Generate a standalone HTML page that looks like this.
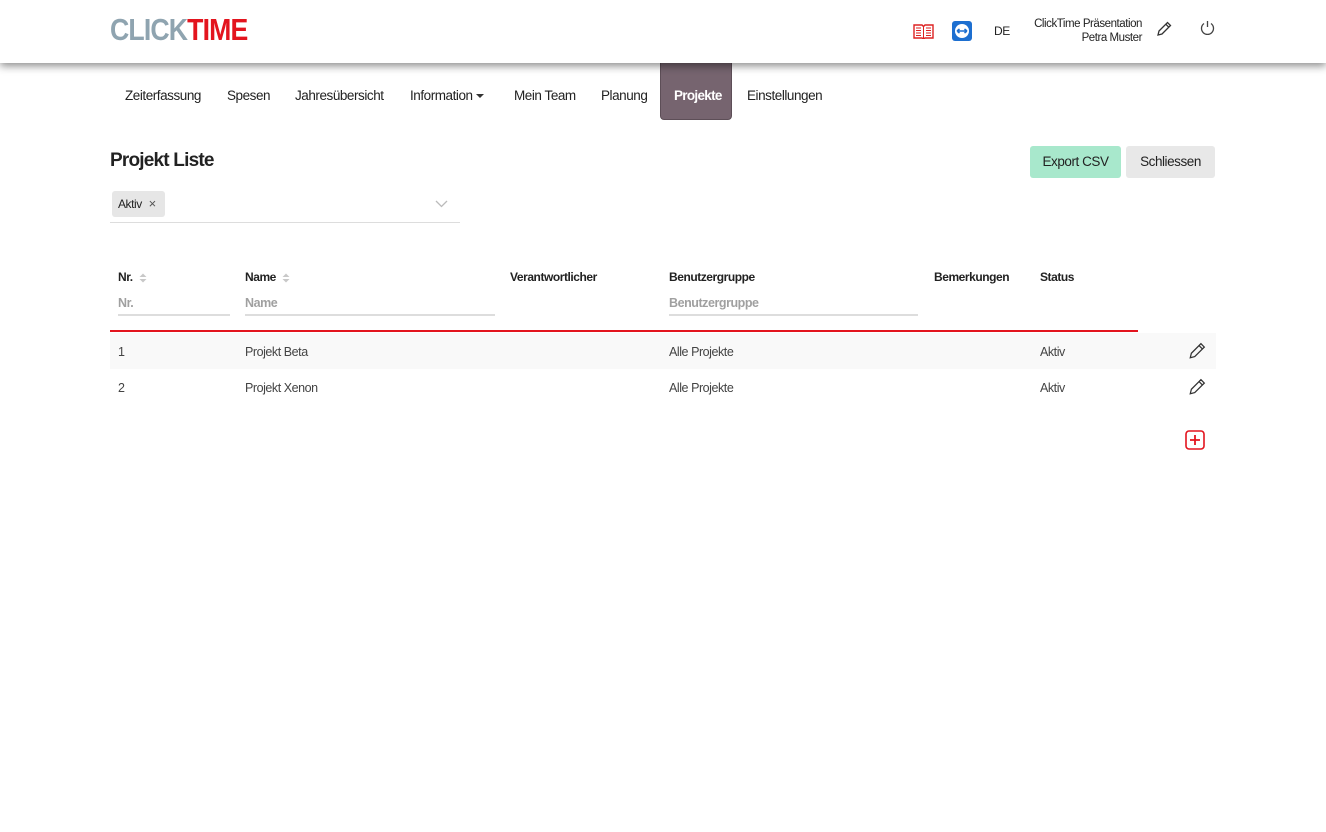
<!DOCTYPE html>
<html><head><meta charset="utf-8">
<style>
*{box-sizing:border-box;margin:0;padding:0}
body{width:1326px;height:832px;background:#fff;font-family:"Liberation Sans Narrow","Liberation Sans",sans-serif;color:#222;position:relative;overflow:hidden;letter-spacing:-0.45px}
.a{position:absolute;white-space:nowrap}
.hdr{position:absolute;left:0;top:0;width:1326px;height:63px;background:#fff;box-shadow:0 3px 8px rgba(0,0,0,.45);z-index:2}
.nav{font-size:13.5px;color:#222;top:88px}
.th{font-size:12px;font-weight:bold;top:270px}
.ph{font-size:12.5px;color:#a0a0a0;font-weight:bold;top:296px}
.ul{position:absolute;height:2px;background:#ddd;top:314px}
.td{font-size:12.5px;color:#444}
.sort{display:inline-block;width:8px;height:12px;vertical-align:middle;margin-left:3px}
</style></head><body>
<div class="hdr">
 <div class="a" style="left:110px;top:12px;font-family:'Liberation Sans',sans-serif;font-size:31px;font-weight:bold;letter-spacing:-1px;transform:scaleX(0.86);transform-origin:left"><span style="color:#8fa4b0">CLICK</span><span style="color:#e3141e">TIME</span></div>
 <svg class="a" style="left:913px;top:24px" width="21" height="15" viewBox="0 0 21 15"><path d="M1 1h8l1.5 1.5L12 1h8v13h-8l-1.5 1L9 14H1z" fill="#fff" stroke="#d22" stroke-width="1.4"/><path d="M10.5 2.5v12M3 4h5M3 6.5h5M3 9h5M3 11.5h5M13 4h5M13 6.5h5M13 9h5M13 11.5h5" stroke="#d22" stroke-width="1"/></svg>
 <svg class="a" style="left:952px;top:21px" width="20" height="20" viewBox="0 0 20 20"><rect width="20" height="20" rx="3" fill="#1d6fd0"/><circle cx="10" cy="10" r="7" fill="#fff"/><path d="M5 10h10M5 10l2.5-2M5 10l2.5 2M15 10l-2.5-2M15 10l-2.5 2" stroke="#1d6fd0" stroke-width="1.6"/></svg>
 <div class="a" style="left:994px;top:24px;font-size:12px">DE</div>
 <div class="a" style="right:184px;top:17px;font-size:11.5px;text-align:right;line-height:14px">ClickTime Präsentation<br>Petra Muster</div>
 <svg class="a" style="left:1156px;top:21px" width="16" height="16" viewBox="0 0 16 16"><path d="M2 14l1-4 8.5-8.5 3 3L6 13z M9.8 3.2l3 3" fill="none" stroke="#333" stroke-width="1.3"/></svg>
 <svg class="a" style="left:1199px;top:20px" width="17" height="17" viewBox="0 0 17 17"><path d="M5 3.5A6 6 0 1 0 12 3.5" fill="none" stroke="#444" stroke-width="1.3"/><path d="M8.5 1v6" stroke="#444" stroke-width="1.3"/></svg>
</div>
<div class="a" style="left:660px;top:60px;width:72px;height:60px;background:#76646f;border-radius:0 0 4px 4px;border:1px solid #5d4e57"></div>
<div class="a nav" style="left:125px">Zeiterfassung</div>
<div class="a nav" style="left:227px">Spesen</div>
<div class="a nav" style="left:295px">Jahresübersicht</div>
<div class="a nav" style="left:410px">Information <span style="display:inline-block;border-left:4px solid transparent;border-right:4px solid transparent;border-top:4px solid #333;vertical-align:middle"></span></div>
<div class="a nav" style="left:514px">Mein Team</div>
<div class="a nav" style="left:601px">Planung</div>
<div class="a nav" style="left:674px;color:#fff;font-weight:bold;letter-spacing:-0.7px">Projekte</div>
<div class="a nav" style="left:747px">Einstellungen</div>

<div class="a" style="left:110px;top:150px;font-size:19px;font-weight:bold;color:#222;letter-spacing:-0.8px">Projekt Liste</div>
<div class="a" style="left:1030px;top:146px;width:91px;height:32px;background:#a8e8cc;border-radius:3px;font-size:13.5px;text-align:center;line-height:32px">Export CSV</div>
<div class="a" style="left:1126px;top:146px;width:89px;height:32px;background:#e8e8e8;border-radius:3px;font-size:13.5px;text-align:center;line-height:32px">Schliessen</div>

<div class="a" style="left:112px;top:191px;width:53px;height:26px;background:#e6e6e6;border-radius:3px;font-size:12px;line-height:26px;padding-left:6px">Aktiv <span style="margin-left:4px;color:#555;font-size:13px">×</span></div>
<svg class="a" style="left:435px;top:200px" width="13" height="8" viewBox="0 0 13 8"><path d="M1 1l5.5 5.5L12 1" fill="none" stroke="#bbb" stroke-width="1.3"/></svg>
<div class="a" style="left:110px;top:222px;width:350px;height:1px;background:#ddd"></div>

<svg width="0" height="0" style="position:absolute"><defs><g id="s"><path d="M0.5 5l3.5-3.5 3.5 3.5z M0.5 7l3.5 3.5 3.5-3.5z" fill="#c8c8c8"/></g></defs></svg>
<div class="a th" style="left:118px">Nr. <svg class="sort" viewBox="0 0 8 12"><use href="#s"/></svg></div>
<div class="a th" style="left:245px">Name <svg class="sort" viewBox="0 0 8 12"><use href="#s"/></svg></div>
<div class="a th" style="left:510px">Verantwortlicher</div>
<div class="a th" style="left:669px">Benutzergruppe</div>
<div class="a th" style="left:934px">Bemerkungen</div>
<div class="a th" style="left:1040px">Status</div>
<div class="a ph" style="left:118px">Nr.</div>
<div class="a ph" style="left:245px">Name</div>
<div class="a ph" style="left:669px">Benutzergruppe</div>
<div class="ul" style="left:118px;width:112px"></div>
<div class="ul" style="left:245px;width:250px"></div>
<div class="ul" style="left:669px;width:249px"></div>
<div class="a" style="left:110px;top:330px;width:1028px;height:2px;background:#e3141e"></div>

<div class="a" style="left:110px;top:333px;width:1106px;height:36px;background:#f9f9f9"></div>
<div class="a td" style="left:118px;top:345px">1</div>
<div class="a td" style="left:245px;top:345px">Projekt Beta</div>
<div class="a td" style="left:669px;top:345px">Alle Projekte</div>
<div class="a td" style="left:1040px;top:345px">Aktiv</div>
<div class="a td" style="left:118px;top:381px">2</div>
<div class="a td" style="left:245px;top:381px">Projekt Xenon</div>
<div class="a td" style="left:669px;top:381px">Alle Projekte</div>
<div class="a td" style="left:1040px;top:381px">Aktiv</div>
<svg class="a" style="left:1188px;top:342px" width="18" height="18" viewBox="0 0 16 16"><path d="M2 14l1-4 8.5-8.5 3 3L6 13z M9.8 3.2l3 3" fill="none" stroke="#333" stroke-width="1.1"/></svg>
<svg class="a" style="left:1188px;top:378px" width="18" height="18" viewBox="0 0 16 16"><path d="M2 14l1-4 8.5-8.5 3 3L6 13z M9.8 3.2l3 3" fill="none" stroke="#333" stroke-width="1.1"/></svg>
<svg class="a" style="left:1185px;top:430px" width="20" height="20" viewBox="0 0 20 20"><rect x="1" y="1" width="18" height="18" rx="3" fill="none" stroke="#e3141e" stroke-width="1.6"/><path d="M10 5v10M5 10h10" stroke="#e3141e" stroke-width="1.8"/></svg>
</body></html>
